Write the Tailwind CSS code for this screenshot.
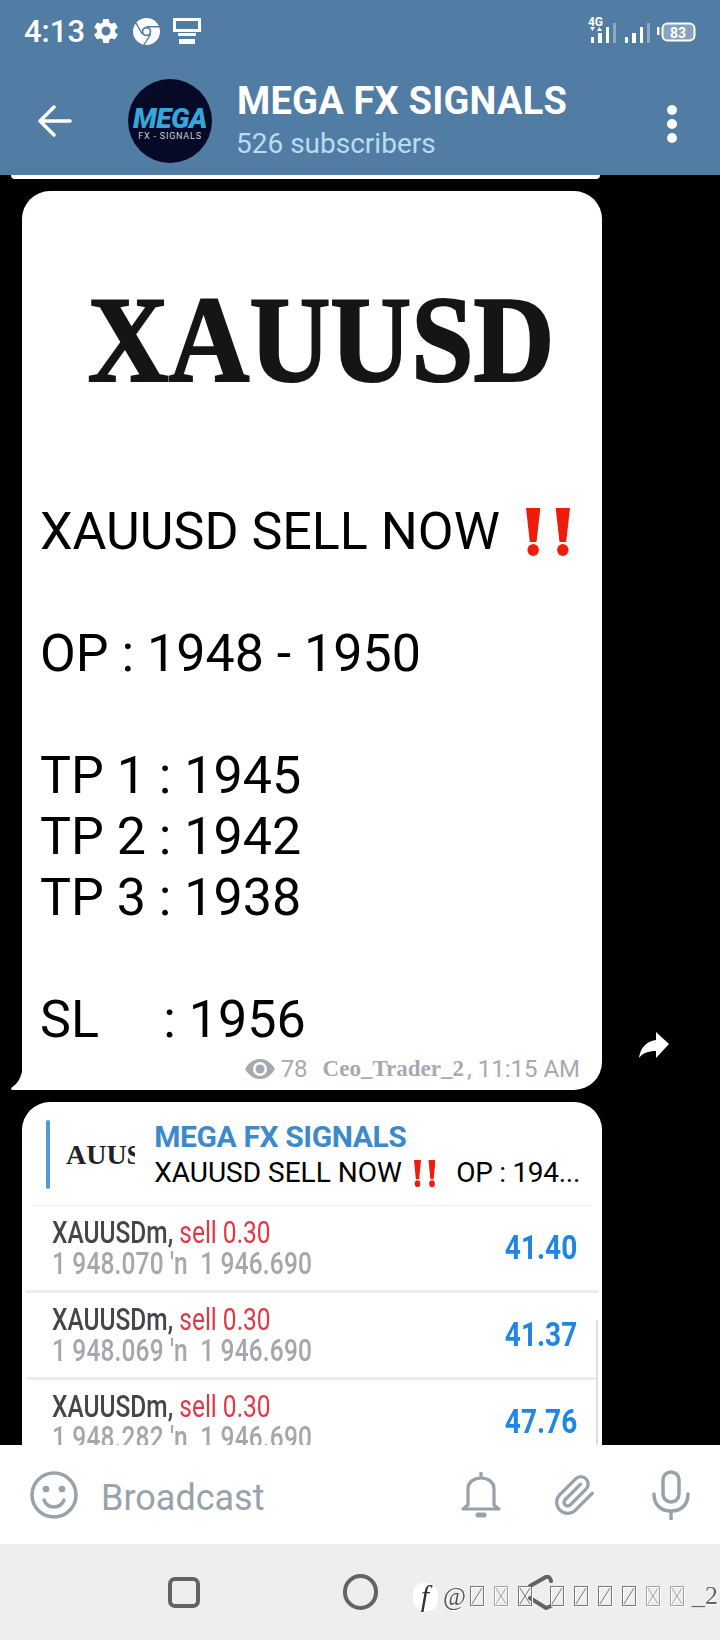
<!DOCTYPE html>
<html lang="en">
  <head>
    <meta charset="UTF-8" />
    <meta name="viewport" content="width=device-width, initial-scale=1.0" />
    <title>MEGA FX SIGNALS</title>
    <script src="https://cdn.jsdelivr.net/npm/@tailwindcss/browser@4"></script>
  </head>
  <body class="bg-black font-['Roboto',sans-serif]">
    <div class="w-[720px] h-[1640px] flex flex-col overflow-hidden">
      <!-- status bar + channel header -->
      <header class="h-[175px] shrink-0 bg-[#517ca3] text-white">
        <div class="h-[62px] pl-6 pr-[24px] flex items-center justify-between">
          <div class="flex items-center">
            <span class="text-[31px] leading-none font-medium w-[67px]">4:13</span>
            <svg class="w-[30px] h-[30px]" viewBox="0 0 24 24" fill="#fff">
              <path d="M19.14 12.94c.04-.3.06-.61.06-.94 0-.32-.02-.64-.07-.94l2.03-1.58c.18-.14.23-.41.12-.61l-1.92-3.32c-.12-.22-.37-.29-.59-.22l-2.39.96c-.5-.38-1.03-.7-1.62-.94l-.36-2.54c-.04-.24-.24-.41-.48-.41h-3.84c-.24 0-.43.17-.47.41l-.36 2.54c-.59.24-1.13.57-1.62.94l-2.39-.96c-.22-.08-.47 0-.59.22L2.74 8.87c-.12.21-.08.47.12.61l2.03 1.58c-.05.3-.09.63-.09.94s.02.64.07.94l-2.03 1.58c-.18.14-.23.41-.12.61l1.92 3.32c.12.22.37.29.59.22l2.39-.96c.5.38 1.03.7 1.62.94l.36 2.54c.05.24.24.41.48.41h3.84c.24 0 .44-.17.47-.41l.36-2.54c.59-.24 1.13-.56 1.62-.94l2.39.96c.22.08.47 0 .59-.22l1.92-3.32c.12-.22.07-.47-.12-.61l-2.01-1.58zM12 15.6c-1.98 0-3.6-1.62-3.6-3.6s1.62-3.6 3.6-3.6 3.6 1.62 3.6 3.6-1.62 3.6-3.6 3.6z" />
            </svg>
            <svg class="w-[27px] h-[27px] ml-[12px]" viewBox="0 0 26 26">
              <circle cx="13" cy="13" r="13" fill="#fff" />
              <circle cx="13" cy="13" r="4.6" fill="#517ca3" />
              <circle cx="13" cy="13" r="3" fill="#fff" />
              <path d="M13 8.4H25M9 15.5L3 5M17 15.5L10.5 26" stroke="#517ca3" stroke-width="1.3" fill="none" />
            </svg>
            <svg class="w-[28px] h-[27px] ml-[13px]" viewBox="0 0 28 27" fill="none">
              <rect x="1.5" y="1.5" width="25" height="11" stroke="#fff" stroke-width="3" />
              <rect x="5" y="15" width="18" height="3" fill="#fff" />
              <rect x="6" y="21" width="16" height="5" fill="#fff" />
            </svg>
          </div>
          <svg class="w-[108px] h-[30px]" viewBox="0 0 108 30">
            <text x="0" y="10" font-family="Roboto" font-size="12" font-weight="700" fill="#fff" textLength="15">4G</text>
            <path d="M2 11h5l-2.500 4zM9 15h5l-2.500-4z" fill="#fff" />
            <rect x="3" y="21" width="3" height="6" fill="#fff" />
            <rect x="10" y="17" width="4" height="10" fill="#fff" />
            <rect x="18" y="11" width="3" height="16" fill="#fff" />
            <rect x="25" y="7" width="3" height="20" fill="#fff" opacity=".35" />
            <rect x="37" y="21" width="3" height="6" fill="#fff" />
            <rect x="44" y="17" width="4" height="10" fill="#fff" />
            <rect x="52" y="11" width="3" height="16" fill="#fff" />
            <rect x="59" y="7" width="3" height="20" fill="#fff" opacity=".35" />
            <rect x="69" y="11" width="2.500" height="8" fill="#fff" />
            <rect x="74.500" y="7.500" width="32" height="17" rx="5" fill="#fff" fill-opacity=".3" stroke="#fff" stroke-width="2" />
            <text x="90" y="21.500" text-anchor="middle" font-family="Roboto" font-size="15" font-weight="700" fill="#fff" textLength="16" lengthAdjust="spacingAndGlyphs">83</text>
          </svg>
        </div>
        <div class="h-[113px] flex items-start pt-[17px]">
          <svg class="w-[34px] h-[32px] ml-[38px] mt-[26px]" viewBox="0 0 34 32" fill="none" stroke="#fff" stroke-width="3.500" stroke-linecap="round" stroke-linejoin="round">
            <path d="M32 16H3M16 2L2 16l14 14" />
          </svg>
          <div class="w-[84px] h-[84px] ml-[56px] rounded-full bg-[#060a26] flex flex-col items-center justify-center">
            <span class="text-[28px] leading-[24px] font-black italic text-[#35a6da] tracking-[-0.5px] mt-[6px]">MEGA</span>
            <span class="text-[9px] leading-[10px] font-normal text-[#c9ced6] tracking-[0.8px] whitespace-nowrap">FX - SIGNALS</span>
          </div>
          <div class="ml-[25px] -mt-[1px]">
            <div class="text-[38px] leading-[46px] font-bold tracking-[0.2px] whitespace-nowrap">MEGA FX SIGNALS</div>
            <div class="text-[28px] leading-[40px] -ml-[1px] text-[#b9dcf4]">526 subscribers</div>
          </div>
          <div class="ml-auto mr-[43px] mt-[26px] flex flex-col gap-[4px]">
            <span class="w-[10px] h-[10px] rounded-full bg-white"></span>
            <span class="w-[10px] h-[10px] rounded-full bg-white"></span>
            <span class="w-[10px] h-[10px] rounded-full bg-white"></span>
          </div>
        </div>
      </header>

      <!-- message list -->
      <main class="h-[1270px] shrink-0 bg-black overflow-hidden relative">
        <div class="h-[4px] w-[589px] ml-[11px] bg-white rounded-b-[14px]"></div>

        <!-- first post -->
        <div class="relative w-[580px] h-[899px] ml-[22px] mt-[12px] bg-white rounded-t-[28px] rounded-br-[28px] text-black">
          <div class="h-[310px] flex justify-center pt-[80px] pl-[18px]">
            <span class="font-['Liberation_Serif',serif] font-bold text-[112px] leading-[136px] text-[#151515] scale-y-[1.1] h-[136px] [-webkit-text-stroke:2px_#151515]">XAUUSD</span>
          </div>
          <div class="pl-[18px] text-[52px] leading-[61px]">
            <div class="flex items-center">XAUUSD SELL NOW<svg class="w-[44px] h-[48px] ml-[26px]" viewBox="0 0 46 48" preserveAspectRatio="none" fill="#ee1c0a"><path d="M0 0h15l-4 34H4zM31 0h15l-4 34h-7z" /><circle cx="7.500" cy="42" r="6" /><circle cx="38.500" cy="42" r="6" /></svg></div>
            <div>&nbsp;</div>
            <div>OP : 1948 - 1950</div>
            <div>&nbsp;</div>
            <div>TP 1 : 1945</div>
            <div>TP 2 : 1942</div>
            <div>TP 3 : 1938</div>
            <div>&nbsp;</div>
            <div class="whitespace-pre">SL     : 1956</div>
          </div>
          <div class="absolute right-[22px] bottom-[7px] flex items-center text-[24px] leading-[28px] text-[#a5aab0]">
            <svg class="w-[30px] h-[22px]" viewBox="0 0 30 22">
              <path d="M15 1C8 1 3 6 0 11c3 5 8 10 15 10s12-5 15-10C27 6 22 1 15 1z" fill="#a5aab0" />
              <circle cx="15" cy="11" r="7" fill="#fff" />
              <circle cx="15" cy="11" r="4.500" fill="#a5aab0" />
            </svg>
            <span class="ml-[6px]">78</span>
            <span class="ml-[15px] font-['Liberation_Serif',serif] font-bold text-[23px]">Ceo_Trader_2</span><span class="ml-[3px]">, 11:15 AM</span>
          </div>
          <svg class="absolute -left-[11px] bottom-0 w-[12px] h-[24px]" viewBox="0 0 12 24" fill="#fff">
            <path d="M12 0C11 10 7 18 0 22c0 1 0 2 2 2h10z" />
          </svg>
        </div>

        <svg class="absolute left-[639px] top-[857px] w-[30px] h-[27px]" viewBox="0 0 30 27" fill="#fff">
          <path d="M17 0l13 12-13 14v-7C9 19 4 21 0 26c1-9 7-17 17-18z" />
        </svg>

        <!-- forwarded result post -->
        <div class="relative w-[580px] h-[360px] ml-[22px] mt-[12px] bg-white rounded-t-[28px] overflow-hidden">
          <div class="h-[103px] pt-[18px] pl-[24px] pr-[22px] flex">
            <div class="w-[4px] h-[69px] rounded-[2px] bg-[#559ad8]"></div>
            <div class="w-[70px] h-[69px] ml-[16px] overflow-hidden flex items-center font-['Liberation_Serif',serif] font-bold text-[28px] text-[#222]">AUUSD</div>
            <div class="ml-[19px] min-w-0">
              <div class="text-[30px] leading-[34px] font-bold text-[#3d8acb] tracking-[-0.4px] whitespace-nowrap">MEGA FX SIGNALS</div>
              <div class="flex items-center text-[28px] leading-[38px] text-black whitespace-nowrap">XAUUSD SELL NOW<svg class="w-[26px] h-[27px] ml-[12px]" viewBox="0 0 46 48" preserveAspectRatio="none" fill="#ee1c0a"><path d="M0 0h15l-4 34H4zM31 0h15l-4 34h-7z" /><circle cx="7.500" cy="42" r="6" /><circle cx="38.500" cy="42" r="6" /></svg><span class="ml-[21px] tracking-[-0.3px]">OP : 194...</span></div>
            </div>
          </div>

          <div class="mx-[10px] h-px bg-[#f1f1f1]"></div>

          <div class="mx-[4px] h-[87px] border-b-[3px] border-[#ececee] flex justify-between pl-[26px] pr-[21px]">
            <div class="origin-left scale-x-[0.79] whitespace-nowrap pt-[12px]">
              <div class="text-[31px] leading-[30px] font-medium text-[#45464b]">XAUUSDm, <span class="font-normal text-[#dd3a45]">sell 0.30</span></div>
              <div class="text-[31px] leading-[31px] font-medium tracking-[0.2px] text-[#a6a7ad]">1 948.070 ′n&nbsp; 1 946.690</div>
            </div>
            <div class="origin-right scale-x-[0.85] text-[33px] leading-[84px] font-bold text-[#1f86e5]">41.40</div>
          </div>
          <div class="mx-[4px] h-[87px] border-b-[3px] border-[#ececee] flex justify-between pl-[26px] pr-[21px]">
            <div class="origin-left scale-x-[0.79] whitespace-nowrap pt-[12px]">
              <div class="text-[31px] leading-[30px] font-medium text-[#45464b]">XAUUSDm, <span class="font-normal text-[#dd3a45]">sell 0.30</span></div>
              <div class="text-[31px] leading-[31px] font-medium tracking-[0.2px] text-[#a6a7ad]">1 948.069 ′n&nbsp; 1 946.690</div>
            </div>
            <div class="origin-right scale-x-[0.85] text-[33px] leading-[84px] font-bold text-[#1f86e5]">41.37</div>
          </div>
          <div class="mx-[4px] h-[87px] flex justify-between pl-[26px] pr-[21px]">
            <div class="origin-left scale-x-[0.79] whitespace-nowrap pt-[12px]">
              <div class="text-[31px] leading-[30px] font-medium text-[#45464b]">XAUUSDm, <span class="font-normal text-[#dd3a45]">sell 0.30</span></div>
              <div class="text-[31px] leading-[31px] font-medium tracking-[0.2px] text-[#a6a7ad]">1 948.282 ′n&nbsp; 1 946.690</div>
            </div>
            <div class="origin-right scale-x-[0.85] text-[33px] leading-[84px] font-bold text-[#1f86e5]">47.76</div>
          </div>
          <div class="absolute right-[4px] top-[218px] w-[2px] h-[130px] bg-[#dfdfe1]"></div>
        </div>
      </main>

      <!-- broadcast bar -->
      <div class="h-[99px] shrink-0 bg-white flex items-center text-[#97a2aa]">
        <svg class="w-[48px] h-[48px] ml-[30px]" viewBox="0 0 48 48" fill="none" stroke="#97a2aa" stroke-width="3.500" stroke-linecap="round">
          <circle cx="24" cy="24" r="22" />
          <path d="M14 29c2 5 6 7 10 7s8-2 10-7" />
          <circle cx="16" cy="18" r="1.600" fill="#97a2aa" />
          <circle cx="32" cy="18" r="1.600" fill="#97a2aa" />
        </svg>
        <span class="ml-[23px] mt-[6px] text-[36px] leading-none">Broadcast</span>
        <svg class="w-[40px] h-[46px] ml-auto" viewBox="0 0 40 46" fill="none" stroke="#97a2aa" stroke-width="3.200" stroke-linejoin="round" stroke-linecap="round">
          <path d="M7 33V17C7 10 13 6 20 6s13 4 13 11v16l5 4H2z" />
          <path d="M20 1v4" />
          <path d="M17 43h6" stroke-width="5" />
        </svg>
        <svg class="w-[44px] h-[44px] ml-[52px]" viewBox="0 0 24 24" fill="none" stroke="#97a2aa" stroke-width="1.800" stroke-linecap="round" stroke-linejoin="round">
          <path d="m21.440 11.050-9.190 9.190a6 6 0 0 1-8.490-8.490l8.570-8.570A4 4 0 1 1 18 8.840l-8.590 8.570a2 2 0 0 1-2.830-2.830l8.490-8.480" />
        </svg>
        <svg class="w-[38px] h-[50px] ml-[55px] mr-[30px]" viewBox="0 0 38 50" fill="none" stroke="#97a2aa" stroke-width="3.500" stroke-linecap="round">
          <rect x="11" y="2" width="16" height="30" rx="8" />
          <path d="M2 24c0 11 7 17 17 17s17-6 17-17M19 41v8" />
        </svg>
      </div>

      <!-- android nav + watermark -->
      <nav class="relative h-[96px] shrink-0 bg-[#eeeeee]">
        <div class="absolute left-[168px] top-[33px] w-[32px] h-[31px] rounded-[7px] border-[4px] border-[#636363]"></div>
        <div class="absolute left-[343px] top-[30px] w-[35px] h-[36px] rounded-full border-[4px] border-[#636363]"></div>
        <svg class="absolute left-[527px] top-[31px] w-[28px] h-[36px]" viewBox="0 0 28 36" fill="none" stroke="#636363" stroke-width="4" stroke-linecap="round">
          <path d="M3 11L19 2Q23 1 24 6M3 23L19 33L24 31" />
        </svg>
        <div class="absolute left-[413px] top-[38px] flex items-center h-[28px] drop-shadow-[1px_1px_0_#fff]">
          <span class="w-[24px] h-[27px] rounded-[10px] bg-white flex items-center justify-center font-['Liberation_Serif',serif] italic text-[30px] leading-none text-[#333]">f</span>
          <span class="ml-[6px] w-[27px] font-['Liberation_Serif',serif] text-[25px] leading-none text-[#555]">@</span>
          <div class="flex gap-[10px]">
            <svg class="w-[14px] h-[20px]" viewBox="0 0 14 20" fill="none" stroke="#777"><rect x=".5" y=".5" width="13" height="19" /><path d="M2 18L12 2" /></svg>
            <svg class="w-[14px] h-[20px]" viewBox="0 0 14 20" fill="none" stroke="#a5a5a5"><rect x=".5" y=".5" width="13" height="19" /><path d="M2 2l10 16M12 2L2 18" /></svg>
            <svg class="w-[14px] h-[20px]" viewBox="0 0 14 20" fill="none" stroke="#777"><rect x=".5" y=".5" width="13" height="19" /><path d="M2 2l10 16M12 2L2 18" /></svg>
            <svg class="w-[14px] h-[20px] ml-[8px]" viewBox="0 0 14 20" fill="none" stroke="#777"><rect x=".5" y=".5" width="13" height="19" /><path d="M2 18L12 2" /></svg>
            <svg class="w-[14px] h-[20px]" viewBox="0 0 14 20" fill="none" stroke="#777"><rect x=".5" y=".5" width="13" height="19" /><path d="M2 18L12 2" /></svg>
            <svg class="w-[14px] h-[20px]" viewBox="0 0 14 20" fill="none" stroke="#777"><rect x=".5" y=".5" width="13" height="19" /><path d="M2 18L12 2" /></svg>
            <svg class="w-[14px] h-[20px]" viewBox="0 0 14 20" fill="none" stroke="#777"><rect x=".5" y=".5" width="13" height="19" /><path d="M2 18L12 2" /></svg>
            <svg class="w-[14px] h-[20px]" viewBox="0 0 14 20" fill="none" stroke="#a5a5a5"><rect x=".5" y=".5" width="13" height="19" /><path d="M2 2l10 16M12 2L2 18" /></svg>
            <svg class="w-[14px] h-[20px]" viewBox="0 0 14 20" fill="none" stroke="#a5a5a5"><rect x=".5" y=".5" width="13" height="19" /><path d="M2 2l10 16M12 2L2 18" /></svg>
          </div>
          <span class="ml-[8px] font-['Liberation_Serif',serif] text-[26px] leading-none text-[#666]">_2</span>
        </div>
      </nav>
    </div>
  </body>
</html>
